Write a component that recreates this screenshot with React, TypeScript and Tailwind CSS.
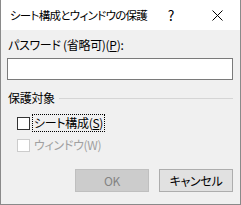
const FONT = "font-['Yu_Gothic_UI','Meiryo_UI','Noto_Sans_CJK_JP',sans-serif] [font-feature-settings:'palt']";

export default function App() {
  return (
    <div className={`w-[241px] h-[205px] flex flex-col bg-[#f0f0f0] border-x border-b border-[#8a8a8a] text-[12px] leading-[16px] tracking-[-0.3px] text-black ${FONT}`}>
      {/* title bar */}
      <div className="h-[30px] shrink-0 bg-white flex items-center">
        <span className="flex-1 pl-[9px] text-[11.5px] tracking-[-0.7px] whitespace-nowrap">シート構成とウィンドウの保護</span>
        <span className="w-[46px] text-center text-[14px]">?</span>
        <span className="w-[46px] flex justify-center">
          <svg width="11" height="11" viewBox="0 0 11 11" stroke="#000" strokeWidth="1" fill="none">
            <path d="M0.5 0.5L10.5 10.5M10.5 0.5L0.5 10.5" />
          </svg>
        </span>
      </div>

      <div className="flex flex-col px-[6px]">
        <p className="mt-[7px] pl-[1px] whitespace-nowrap">
          パスワード (省略可)(<span className="underline">P</span>):
        </p>
        <div className="mt-[5px] h-[22px] w-[226px] bg-white border border-[#7a7a7a]" />

        <div className="mt-[10px] flex items-center gap-[4px] pl-[1px]">
          <span>保護対象</span>
          <div className="flex-1 h-px bg-[#d5d5d5] mr-[1px]" />
        </div>

        <div className="mt-[8px] pl-[10px] flex items-center h-[18px]">
          <div className="w-[13px] h-[13px] bg-white border border-[#333]" />
          <span className="ml-[2px] px-[1px] border border-dotted border-black h-[18px] flex items-center">
            シート構成(<span className="underline">S</span>)
          </span>
        </div>

        <div className="mt-[4px] pl-[10px] flex items-center h-[18px] text-[#a0a0a0]">
          <div className="w-[13px] h-[13px] bg-white border border-[#cccccc]" />
          <span className="ml-[3px] px-[1px]">ウィンドウ(W)</span>
        </div>

        <div className="mt-[15px] flex justify-end gap-[10px] pr-[1px]">
          <div className="w-[74px] h-[23px] flex items-center justify-center bg-[#cccccc] border border-[#bfbfbf] text-[#838383]">
            OK
          </div>
          <div className="w-[74px] h-[23px] flex items-center justify-center bg-[#e1e1e1] border border-[#adadad]">
            キャンセル
          </div>
        </div>
      </div>
    </div>
  );
}
